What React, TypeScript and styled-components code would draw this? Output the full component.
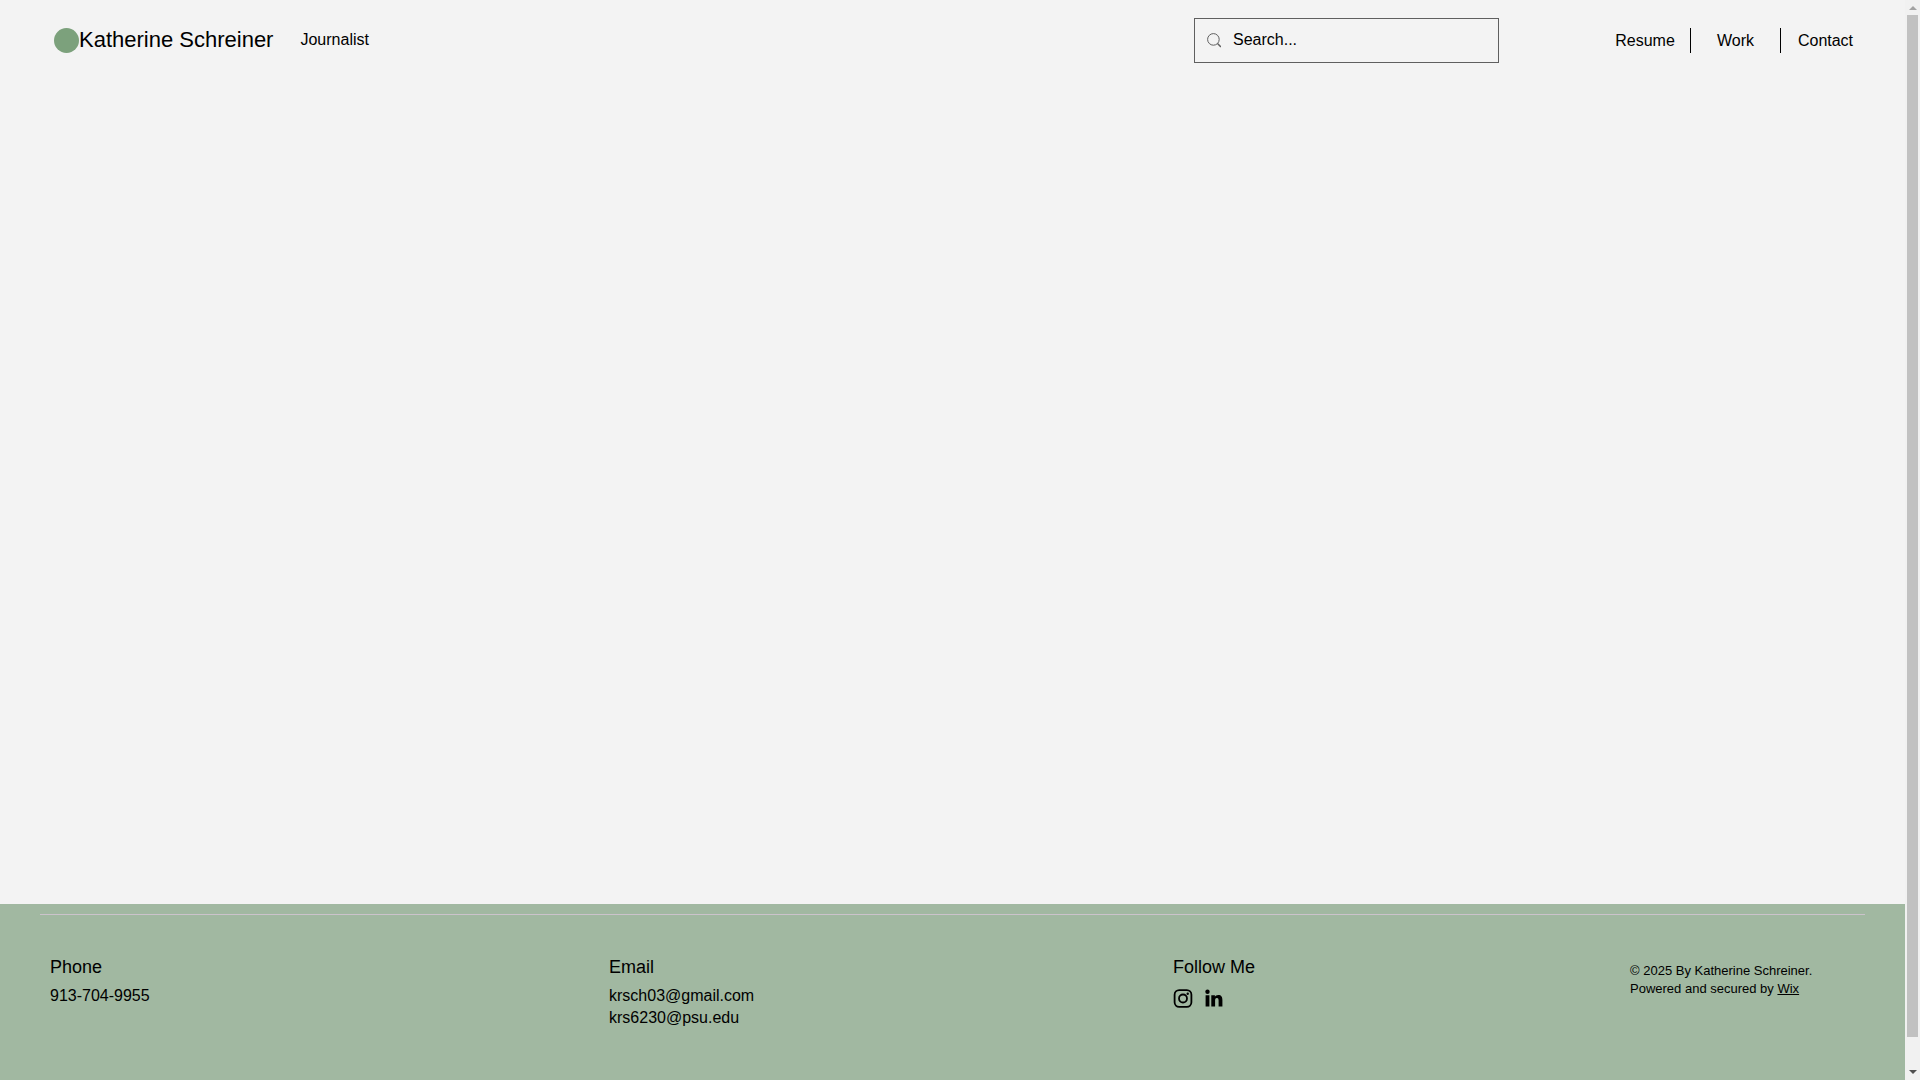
import React from "react";
import styled, { createGlobalStyle } from "styled-components";

const GlobalStyle = createGlobalStyle`
  *, *::before, *::after { box-sizing: border-box; }
  body {
    margin: 0;
    background: #f3f3f3;
    color: #000;
    font: 16px/22px "Liberation Sans", Arial, sans-serif;
  }
  a { color: inherit; text-decoration: none; }
`;

const Viewport = styled.div`
  display: grid;
  grid-template-columns: minmax(0, 1fr) 15px;
  height: 100vh;
`;

const Page = styled.div`
  display: flex;
  flex-direction: column;
`;

const Header = styled.header`
  display: flex;
  align-items: center;
  padding: 18px 35px 18px 54px;
`;

const Dot = styled.span`
  width: 25px;
  height: 25px;
  border-radius: 50%;
  background: #7ca17c;
`;

const SiteName = styled.h1`
  margin: 0;
  padding-bottom: 2px;
  font-size: 22px;
  line-height: 30px;
  font-weight: 400;
`;

const Role = styled.p`
  margin: 0 auto 0 27px;
  padding-bottom: 2px;
`;

const SearchBox = styled.label`
  display: flex;
  align-items: center;
  gap: 12px;
  width: 305px;
  height: 45px;
  padding: 0 12px;
  border: 1px solid #5f5f5f;
  margin-right: 101px;
`;

const SearchInput = styled.input`
  flex: 1;
  min-width: 0;
  padding: 0 0 2px;
  border: 0;
  outline: 0;
  background: transparent;
  color: inherit;
  font: inherit;
  &::placeholder { color: #000; opacity: 1; }
`;

const Nav = styled.nav`
  display: flex;
`;

const NavLink = styled.a`
  width: 90px;
  line-height: 25px;
  text-align: center;
  & + & { border-left: 1px solid #000; }
`;

const Main = styled.main`
  flex: 1;
`;

const Footer = styled.footer`
  height: 176px;
  padding: 10px 40px;
  background: #a1b8a1;
`;

const Rule = styled.hr`
  height: 1px;
  margin: 0;
  border: 0;
  background: #cbc3cb;
`;

const FooterColumns = styled.div`
  display: grid;
  grid-template-columns: 559fr 564fr 457fr 235fr;
  padding: 40px 0 0 10px;
`;

const FooterTitle = styled.h2`
  margin: 0 0 6px;
  font-size: 18px;
  line-height: 24px;
  font-weight: 400;
`;

const Contact = styled.a`
  display: block;
`;

const Socials = styled.div`
  display: flex;
  gap: 11px;
  padding-top: 3px;
`;

const SocialLink = styled.a`
  display: flex;
`;

const Legal = styled.p`
  margin: 0;
  padding-top: 7px;
  font-size: 13px;
  line-height: 18px;
`;

const WixLink = styled.a`
  && { text-decoration: underline; }
`;

const ScrollTrack = styled.div`
  display: flex;
  flex-direction: column;
  align-items: center;
  padding: 6px 0;
  background: #f1f1f1;
`;

const ScrollArrow = styled.span<{ $down?: boolean }>`
  border: 4px solid transparent;
  border-width: ${(p) => (p.$down ? "4px 4px 0" : "0 4px 4px")};
  border-${(p) => (p.$down ? "top" : "bottom")}-color: ${(p) => (p.$down ? "#505050" : "#a3a3a3")};
`;

const ScrollThumb = styled.div`
  width: 11px;
  flex: 1;
  margin: 5px 0 33px;
  background: #c1c1c1;
`;

export default function App() {
  return (
    <Viewport>
      <GlobalStyle />
      <Page>
        <Header>
          <Dot />
          <SiteName>Katherine Schreiner</SiteName>
          <Role>Journalist</Role>
          <SearchBox>
            <svg width="14" height="15" viewBox="0 0 14 15" fill="none" stroke="#5f5f5f" aria-hidden="true">
              <circle cx="6.4" cy="6.4" r="5.8" />
              <path d="M10.5 10.5 13.900 13.900" strokeWidth="1.4" />
            </svg>
            <SearchInput type="text" placeholder="Search..." aria-label="Search" />
          </SearchBox>
          <Nav>
            <NavLink href="#resume">Resume</NavLink>
            <NavLink href="#work">Work</NavLink>
            <NavLink href="#contact">Contact</NavLink>
          </Nav>
        </Header>
        <Main />
        <Footer>
          <Rule />
          <FooterColumns>
            <section>
              <FooterTitle>Phone</FooterTitle>
              <Contact href="tel:913-704-9955">913-704-9955</Contact>
            </section>
            <section>
              <FooterTitle>Email</FooterTitle>
              <Contact href="mailto:krsch03@gmail.com">krsch03@gmail.com</Contact>
              <Contact href="mailto:krs6230@psu.edu">krs6230@psu.edu</Contact>
            </section>
            <section>
              <FooterTitle>Follow Me</FooterTitle>
              <Socials>
                <SocialLink href="#instagram" aria-label="Instagram">
                  <svg width="20" height="20" viewBox="0 0 20 20" fill="none" stroke="#000" strokeWidth="1.8">
                    <rect x="1.6" y="2.1" width="16.8" height="16.8" rx="4.6" />
                    <circle cx="10" cy="10.5" r="4" />
                    <circle cx="14.7" cy="5.8" r="1.2" fill="#000" stroke="none" />
                  </svg>
                </SocialLink>
                <SocialLink href="#linkedin" aria-label="LinkedIn">
                  <svg width="20" height="20" viewBox="0 0 20 20">
                    <circle cx="3.5" cy="3.7" r="2.2" />
                    <path d="M1.6 7.2h3.8V18.600H1.6zM7.300 7.200h3.600v1.500c.6-1.100 1.800-1.800 3.300-1.800 3.200 0 4.200 2 4.200 5v6.700h-3.800v-6c0-1.500-.2-2.700-1.700-2.700s-1.800 1.300-1.800 2.700v6H7.300z" />
                  </svg>
                </SocialLink>
              </Socials>
            </section>
            <Legal>
              © 2025 By Katherine Schreiner.
              <br />
              Powered and secured by <WixLink href="https://www.wix.com">Wix</WixLink>
            </Legal>
          </FooterColumns>
        </Footer>
      </Page>
      <ScrollTrack aria-hidden="true">
        <ScrollArrow />
        <ScrollThumb />
        <ScrollArrow $down />
      </ScrollTrack>
    </Viewport>
  );
}
